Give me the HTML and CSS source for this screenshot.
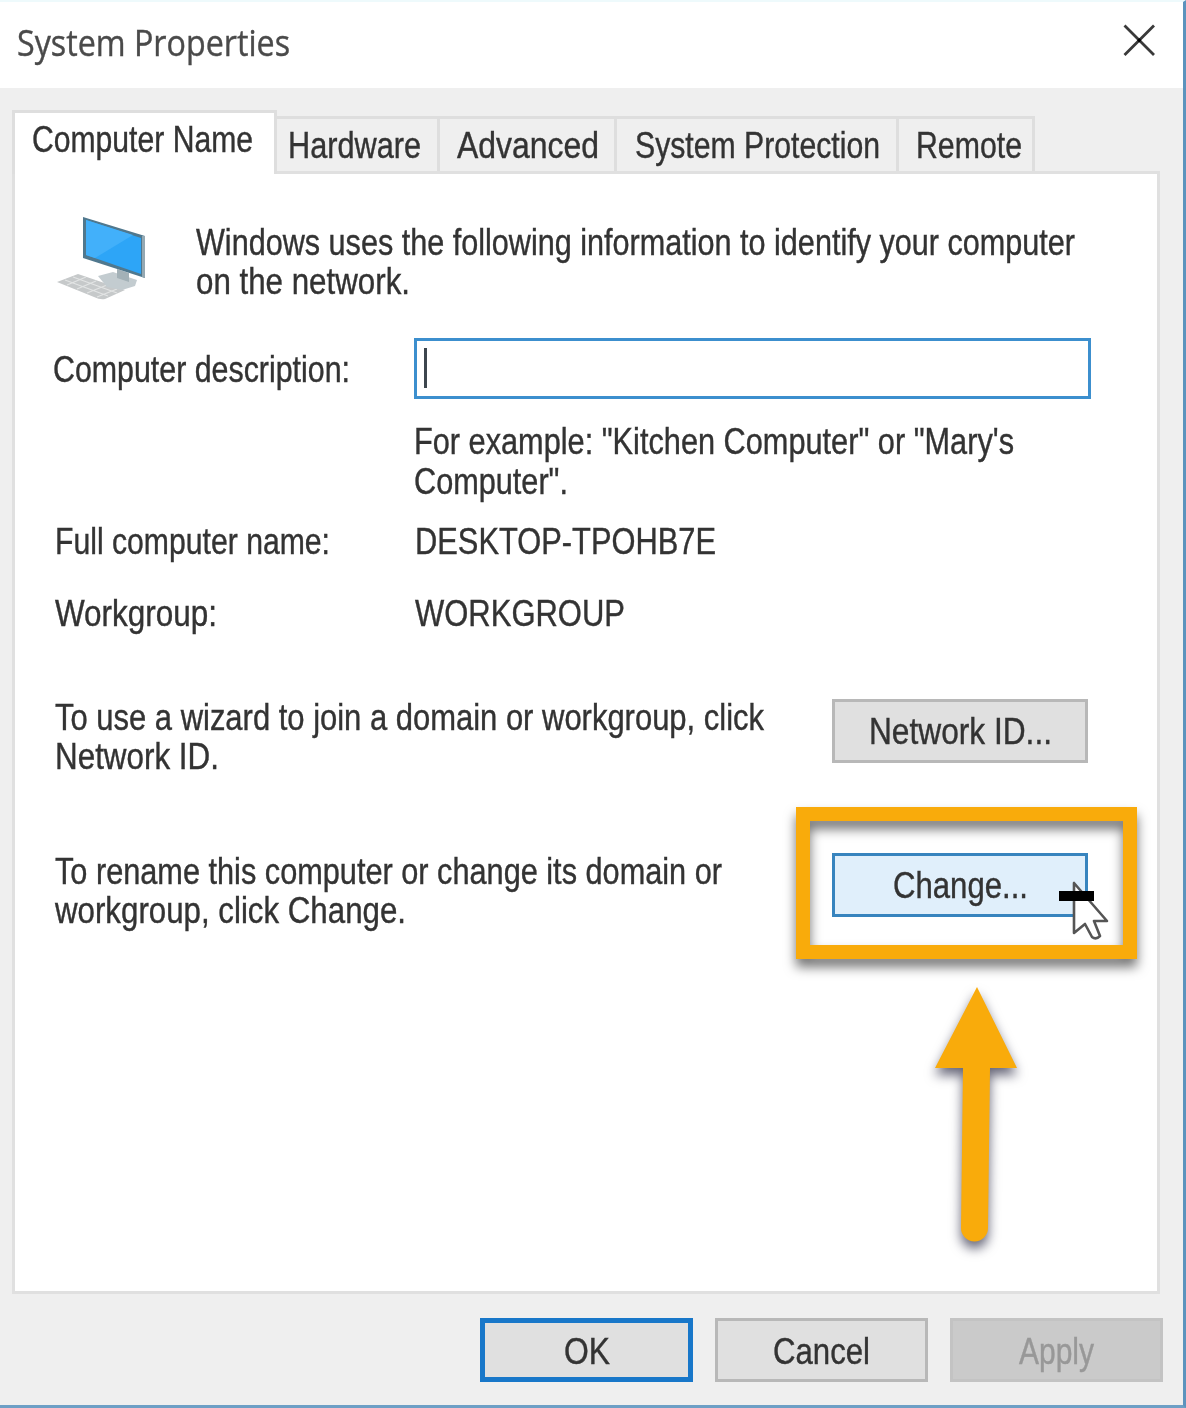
FILE: index.html
```html
<!DOCTYPE html>
<html lang="en">
<head>
<meta charset="utf-8">
<title>System Properties</title>
<link rel="stylesheet" href="styles.css">
</head>
<body>
<div class="window">
  <header class="titlebar">
    <h1 class="title"><span class="fit" data-w="273">System Properties</span></h1>
    <svg class="close" width="34" height="34" viewBox="0 0 34 34"><path d="M2.500 2.500 32 32M32 2.500 2.500 32" stroke="#3a3a3a" stroke-width="2.800" fill="none"/><path d="M15 17.200 17.200 15 19.400 17.200 17.200 19.400Z" fill="#000"/></svg>
  </header>

  <nav class="tabs">
    <div class="tab active"><span class="fit" data-w="221">Computer Name</span></div>
    <div class="tab hardware"><span class="fit" data-w="133">Hardware</span></div>
    <div class="tab advanced"><span class="fit" data-w="142">Advanced</span></div>
    <div class="tab protection"><span class="fit" data-w="245">System Protection</span></div>
    <div class="tab remote"><span class="fit" data-w="106">Remote</span></div>
  </nav>

  <main class="panel">
    <section class="intro">
      <svg class="pc" width="92" height="86" viewBox="0 0 92 86">
        <path d="M2 67 23 59 70 75 50 84Q45 85 39 82Z" fill="#c6c9ca"/>
        <path d="M10 65 53 81M18 62 62 78M12 70 31 62M22 74 41 66M32 78 52 70M42 82 62 74" stroke="#e2e4e4" stroke-width="1.200" fill="none"/>
        <path d="M43 61 58 57 82 65 80 71 67 75 52 72Z" fill="#c3ccd0"/>
        <path d="M62 54 74 58V67L62 63Z" fill="#a3b1b7"/>
        <path d="M28 2 90 21 90 63 28 43Z" fill="#50788e"/>
        <path d="M31 5 86 23 86 59 31 40Z" fill="#2da5f7"/>
        <path d="M31 5 78 20 40 43 31 40Z" fill="#42b0fa"/>
        <path d="M87 21 90 21 90 63 87 62Z" fill="#94a8b2"/>
      </svg>
      <div class="text">
        <p><span class="fit" data-w="879">Windows uses the following information to identify your computer</span></p>
        <p><span class="fit" data-w="214">on the network.</span></p>
      </div>
    </section>

    <section class="row description">
      <p class="label"><span class="fit" data-w="297">Computer description:</span></p>
      <div class="input"><i class="caret"></i></div>
    </section>
    <section class="example">
      <p><span class="fit" data-w="600">For example: "Kitchen Computer" or "Mary's</span></p>
      <p><span class="fit" data-w="154">Computer".</span></p>
    </section>
    <section class="row fullname">
      <p class="label"><span class="fit" data-w="275">Full computer name:</span></p>
      <p><span class="fit" data-w="301">DESKTOP-TPOHB7E</span></p>
    </section>
    <section class="row workgroup">
      <p class="label"><span class="fit" data-w="162">Workgroup:</span></p>
      <p><span class="fit" data-w="210">WORKGROUP</span></p>
    </section>

    <section class="action wizard">
      <div class="text">
        <p><span class="fit" data-w="709">To use a wizard to join a domain or workgroup, click</span></p>
        <p><span class="fit" data-w="164">Network ID.</span></p>
      </div>
      <div class="button"><span class="fit" data-w="183">Network ID...</span></div>
    </section>
    <section class="action rename">
      <div class="text">
        <p><span class="fit" data-w="667">To rename this computer or change its domain or</span></p>
        <p><span class="fit" data-w="351">workgroup, click Change.</span></p>
      </div>
      <div class="button hover"><span class="fit" data-w="135">Change...</span>
        <div class="highlight"></div>
        <svg class="cursor" width="50" height="62" viewBox="0 0 50 62">
          <path d="M15 4V54L26 45 33 58Q37 61 41 57L35 42H48Z" fill="#fff" stroke="#555" stroke-width="2.600" stroke-linejoin="round"/>
          <path d="M0 12H35V22H0Z" fill="#000"/>
        </svg>
        <svg class="arrow" width="120" height="290" viewBox="0 0 120 290">
          <path d="M57 16 97 97H70L68 257A13.500 13.500 0 0 1 41 257L43 97H15Z" fill="#f9ab0b"/>
        </svg>
      </div>
    </section>
  </main>

  <footer class="buttons">
    <div class="button ok"><span class="fit" data-w="46">OK</span></div>
    <div class="button"><span class="fit" data-w="97">Cancel</span></div>
    <div class="button disabled"><span class="fit" data-w="75">Apply</span></div>
  </footer>
</div>
<script src="script.js"></script>
</body>
</html>
```

FILE: styles.css
```css
* { box-sizing: border-box; }
body { margin: 0; background: #efefef; }
h1, p { margin: 0; font-weight: normal; }
svg { display: block; flex: none; }

.window {
  width: 1186px;
  height: 1408px;
  display: flex;
  flex-direction: column;
  overflow: hidden;
  background: #efefef;
  border-right: 3px solid #5c93bd;
  border-bottom: 3px solid #6d9fc5;
  border-top: 2px solid #eefafc;
  font: 36px/39px "Liberation Sans", Arial, sans-serif;
  color: #333;
  -webkit-text-stroke: .4px currentColor;
}

/* Condensed lettering: each run is squeezed to its data-w width */
.fit {
  display: inline-block;
  white-space: nowrap;
  transform-origin: 0 50%;
}

.titlebar {
  height: 86px;
  flex: none;
  display: flex;
  justify-content: space-between;
  padding: 21px 27px 0 17px;
  background: #fff;
}
.title { font: 36px/39px "Open Sans", "Noto Sans", sans-serif; color: #4a4a4a; }

.tabs {
  height: 83px;
  flex: none;
  display: flex;
  align-items: flex-end;
  padding-left: 12px;
  position: relative;
}
.tab {
  height: 55px;
  padding-top: 7px;
  border: solid #dedede;
  border-width: 3px 3px 0 0;
}
.tab.active {
  width: 265px;
  height: 64px;
  margin-bottom: -3px;
  padding: 7px 0 0 17px;
  border-left-width: 3px;
  background: #fff;
  z-index: 1;
}
.hardware { width: 163px; padding-left: 11px; }
.advanced { width: 177px; padding-left: 17px; }
.protection { width: 282px; padding-left: 18px; }
.remote { width: 136px; padding-left: 17px; }

.panel {
  width: 1148px;
  height: 1123px;
  flex: none;
  margin-left: 12px;
  padding: 41px 0 0 40px;
  background: #fff;
  border: 3px solid #e0e0e0;
}
.intro { display: flex; height: 123px; }
.intro .text { margin: 8px 0 0 49px; }
.row { display: flex; }
.label { width: 361px; flex: none; }
.description { height: 84px; }
.description .label { margin: 12px -2px 0 -2px; width: 362px; }
.input {
  width: 677px;
  height: 61px;
  border: 3px solid #3c8fce;
  background: #fff;
  padding: 7px 0 0 7px;
  margin-left: 1px;
}
.caret { display: block; width: 3px; height: 40px; background: #3d464e; }
.example { padding-left: 359px; line-height: 40px; height: 100px; }
.row.fullname { height: 72px; }
.row.workgroup { height: 104px; }
.row.fullname .label, .row.workgroup .label { width: 360px; }
.action { display: flex; height: 154px; }
.action .text { width: 777px; flex: none; }
.wizard .button, .rename .button { margin-top: 1px; width: 256px; }

.button {
  width: 257px;
  height: 64px;
  display: flex;
  justify-content: center;
  padding-top: 10px;
  position: relative;
  background: #e0e0e0;
  border: 3px solid #b8b8b8;
}
.button.hover { background: #e0effb; border-color: #3784be; }

.highlight {
  position: absolute;
  left: -39px;
  top: -49px;
  width: 341px;
  height: 152px;
  border: 14px solid #f9ab0b;
  filter: drop-shadow(0 8px 6px rgba(0, 0, 0, .55));
}
.cursor { position: absolute; left: 224px; top: 23px; }
.arrow {
  position: absolute;
  left: 85px;
  top: 115px;
  overflow: visible;
  filter: drop-shadow(0 7px 6px rgba(0, 0, 30, .6));
}

.buttons {
  display: flex;
  gap: 22px;
  margin: 24px 0 0 480px;
}
.buttons .button { width: 213px; padding-top: 11px; }
.buttons .ok { border: 5px solid #1877c9; padding-top: 9px; }
.buttons .disabled { background: #cacaca; border-color: #c3c3c3; color: #989898; }
```

FILE: script.js
```js
// Squeeze every text run to its design width and reserve exactly that width.
document.querySelectorAll('.fit').forEach(function (el) {
  var target = Number(el.dataset.w);
  var natural = el.getBoundingClientRect().width;
  el.style.transform = 'scaleX(' + target / natural + ')';
  el.style.marginRight = (target - natural) + 'px';
  el.style.flex = 'none';
});
```
